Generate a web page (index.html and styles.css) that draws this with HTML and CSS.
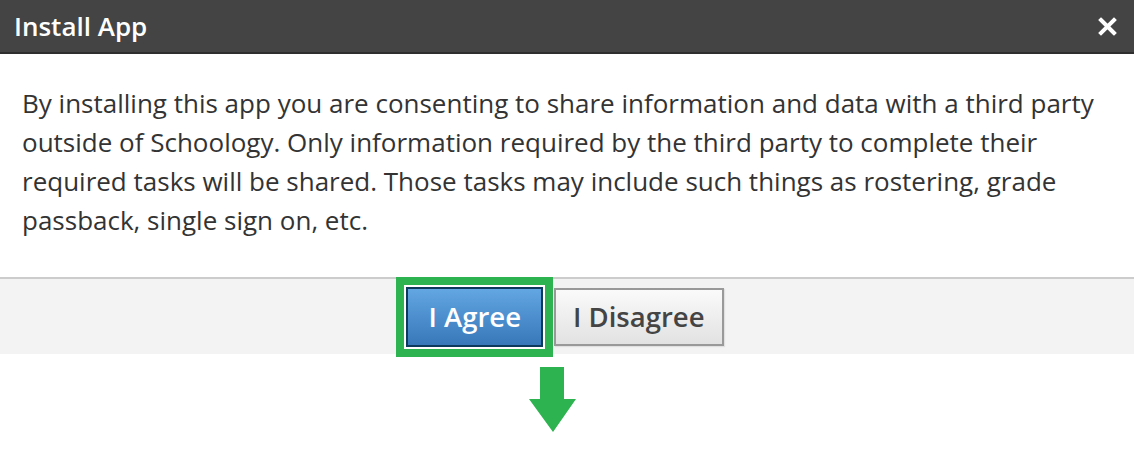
FILE: index.html
```html
<!DOCTYPE html>
<html>
<head>
<meta charset="UTF-8">
<link rel="stylesheet" href="styles.css">
<title>Install App</title>
</head>
<body>

<div class="dialog">
  <div class="dialog-header">
    <span class="dialog-title">Install App</span>
    <span class="dialog-close" title="Close">
      <svg width="19" height="19" viewBox="0 0 19 19"><path d="M3 3 L16 16 M16 3 L3 16" stroke="#fff" stroke-width="4" stroke-linecap="square"/></svg>
    </span>
  </div>

  <div class="dialog-body">
    <p>By installing this app you are consenting to share information and data with a third party
    outside of Schoology. Only information required by the third party to complete their
    required tasks will be shared. Those tasks may include such things as rostering, grade
    passback, single sign on, etc.</p>
  </div>

  <div class="dialog-footer">
    <button class="btn btn-primary highlight">I Agree</button>
    <button class="btn">I Disagree</button>
  </div>
</div>

<div class="pointer">
  <svg width="48" height="66" viewBox="0 0 48 66"><path d="M11 0 H35 V32 H47 L24 65 L0 32 H11 Z" fill="#2db34f"/></svg>
</div>

</body>
</html>
```

FILE: styles.css
```css
body { margin: 0; background-color: #FFFFFF; color: #333333;
       font-family: "Open Sans", "Liberation Sans", sans-serif; }

.dialog-header { height: 52px; background-color: #444444;
                 border-bottom: 2px solid #2e2e2e;
                 display: flex; align-items: center; justify-content: space-between;
                 padding: 0 17px 0 14px; }
.dialog-title { color: #FFFFFF; font-size: 26px; font-weight: 600; }
.dialog-close { display: flex; cursor: pointer; }

.dialog-body { border-bottom: 2px solid #cccccc; padding: 0 22px; }
.dialog-body p { margin: 0; padding: 30px 0 37px; font-size: 26px; line-height: 39px; }

.dialog-footer { background-color: #f3f3f3; height: 75px;
                 display: flex; justify-content: center; align-items: center; gap: 11px;
                 padding-right: 4px; }

.btn { font-family: inherit; font-size: 27.5px; font-weight: 600; color: #444444;
       height: 58px; padding: 0 17px; border: 2px solid #999999; border-radius: 0;
       background: linear-gradient(#fafafa, #e2e2e2); cursor: pointer;
       box-shadow: 1px 1px 1px rgba(0, 0, 0, 0.08); }
.btn-primary { color: #FFFFFF; height: 60px; padding: 0 20px;
               border-color: #0d3a5c;
               background: linear-gradient(#62a6e2, #3878ba); }

.highlight { box-shadow: 0 0 0 2px #FFFFFF, 0 0 0 10px #2db34f; }

.pointer { padding: 13px 0 0 529px; }
.pointer svg { display: block; }
```
